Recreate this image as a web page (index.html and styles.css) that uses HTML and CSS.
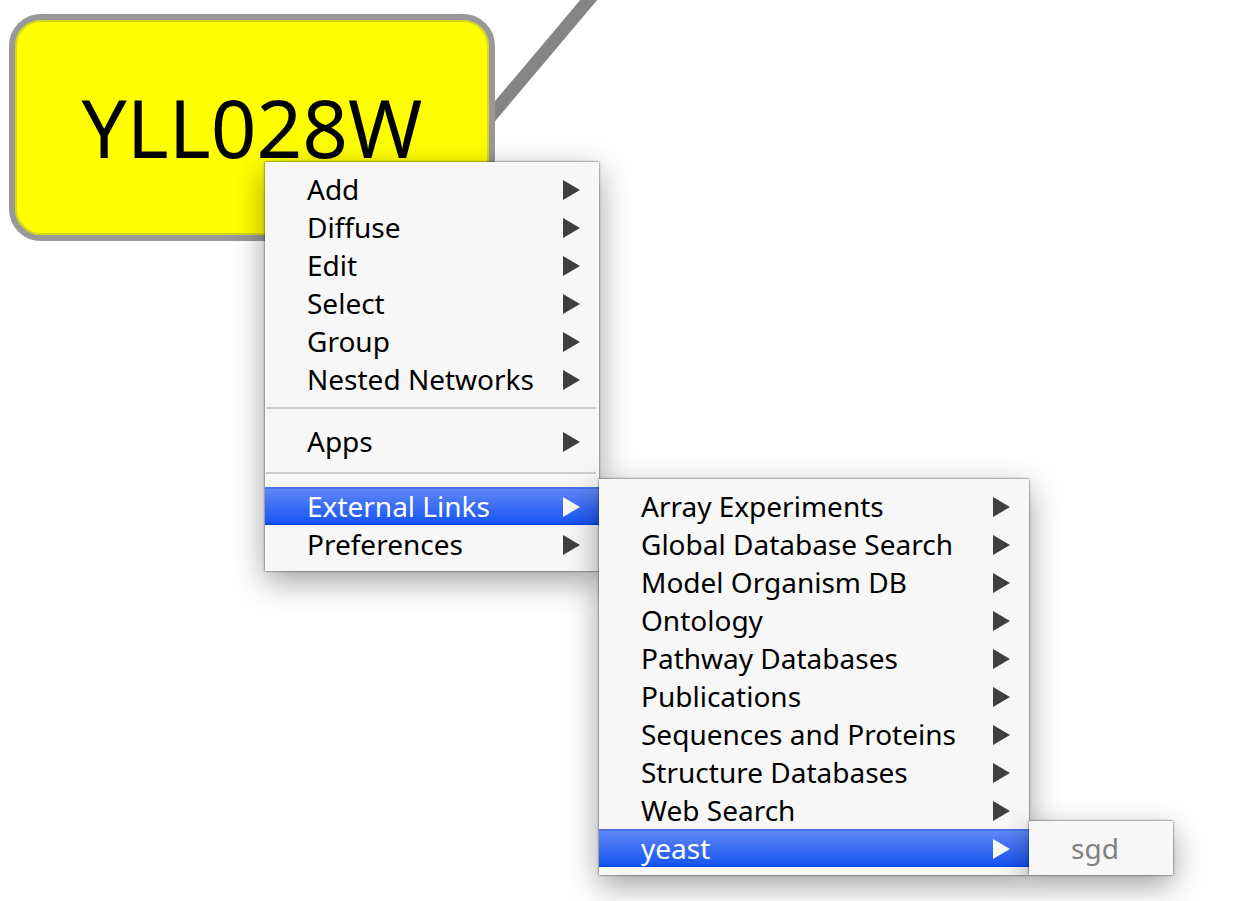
FILE: index.html
```html
<!DOCTYPE html>
<html lang="en">
<head>
<meta charset="utf-8">
<title>Network view</title>
<link rel="stylesheet" href="styles.css">
</head>
<body>
<main class="canvas">
  <svg class="edge" width="640" height="140" viewBox="0 0 640 140" aria-hidden="true"><path d="M480 129L598 -11" stroke="#858585" stroke-width="13" fill="none"/></svg>
  <div class="node">YLL028W</div>

  <div class="menu context-menu" role="menu">
    <div class="row"><button class="item" role="menuitem">Add<span class="arrow"></span></button></div>
    <div class="row"><button class="item" role="menuitem">Diffuse<span class="arrow"></span></button></div>
    <div class="row"><button class="item" role="menuitem">Edit<span class="arrow"></span></button></div>
    <div class="row"><button class="item" role="menuitem">Select<span class="arrow"></span></button></div>
    <div class="row"><button class="item" role="menuitem">Group<span class="arrow"></span></button></div>
    <div class="row"><button class="item" role="menuitem">Nested Networks<span class="arrow"></span></button></div>
    <hr class="separator">
    <div class="row"><button class="item" role="menuitem">Apps<span class="arrow"></span></button></div>
    <hr class="separator wide">
    <div class="row">
      <button class="item active" role="menuitem" aria-expanded="true">External Links<span class="arrow"></span></button>
      <div class="menu submenu links-menu" role="menu">
        <div class="row"><button class="item" role="menuitem">Array Experiments<span class="arrow"></span></button></div>
        <div class="row"><button class="item" role="menuitem">Global Database Search<span class="arrow"></span></button></div>
        <div class="row"><button class="item" role="menuitem">Model Organism DB<span class="arrow"></span></button></div>
        <div class="row"><button class="item" role="menuitem">Ontology<span class="arrow"></span></button></div>
        <div class="row"><button class="item" role="menuitem">Pathway Databases<span class="arrow"></span></button></div>
        <div class="row"><button class="item" role="menuitem">Publications<span class="arrow"></span></button></div>
        <div class="row"><button class="item" role="menuitem">Sequences and Proteins<span class="arrow"></span></button></div>
        <div class="row"><button class="item" role="menuitem">Structure Databases<span class="arrow"></span></button></div>
        <div class="row"><button class="item" role="menuitem">Web Search<span class="arrow"></span></button></div>
        <div class="row">
          <button class="item active" role="menuitem" aria-expanded="true">yeast<span class="arrow"></span></button>
          <div class="menu submenu yeast-menu" role="menu">
            <div class="row"><button class="item" role="menuitem" disabled>sgd</button></div>
          </div>
        </div>
      </div>
    </div>
    <div class="row"><button class="item" role="menuitem">Preferences<span class="arrow"></span></button></div>
  </div>
</main>
</body>
</html>
```
FILE: styles.css
```css
* {
  box-sizing: border-box;
}

body {
  margin: 0;
  background: #fff;
  font-family: "Lucida Grande", "Noto Sans", sans-serif;
}

.canvas {
  position: relative;
  min-height: 100vh;
  overflow: hidden;
}

.edge {
  position: absolute;
  top: 0;
  left: 0;
}

.node {
  position: absolute;
  top: 14px;
  left: 9px;
  display: flex;
  align-items: center;
  justify-content: center;
  width: 486px;
  height: 227px;
  padding-bottom: 2px;
  border: 6px solid #999;
  border-radius: 32px;
  background: #ff0;
  box-shadow: inset 0 0 0 2px #d6d61f;
  font-size: 80px;
  line-height: 96px;
}

.menu {
  position: absolute;
  padding: 8px 0;
  background: #f7f7f7;
  box-shadow: 0 0 2px rgba(0, 0, 0, 0.75), 0 10px 30px rgba(0, 0, 0, 0.38);
}

.context-menu {
  top: 162px;
  left: 265px;
  width: 334px;
}

.submenu {
  top: -8px;
  left: 100%;
  z-index: 1;
}

.links-menu {
  width: 430px;
}

.yeast-menu {
  width: 144px;
}

.separator {
  height: 2px;
  margin: 9px 3px 13px 1px;
  border: 0;
  background: #ccc;
}

.separator.wide {
  margin-top: 12px;
}

.row {
  position: relative;
}

.item {
  display: flex;
  align-items: center;
  justify-content: space-between;
  width: 100%;
  height: 38px;
  padding: 0 19px 0 42px;
  border: 0;
  background: transparent;
  color: #000;
  font: inherit;
  font-size: 28px;
  line-height: 38px;
  text-align: left;
  white-space: nowrap;
}

.item.active {
  background: linear-gradient(#4a72e6 2px, #5f86f7 2px, #1856f2 36px, #0449e6 36px);
  color: #fff;
}

.item:disabled {
  color: #808080;
}

.arrow {
  width: 17px;
  height: 22px;
  background: #3f3f3f;
  clip-path: polygon(0 2px, 100% 12px, 0 100%);
}

.active .arrow {
  background: #f7f7f7;
}
```
